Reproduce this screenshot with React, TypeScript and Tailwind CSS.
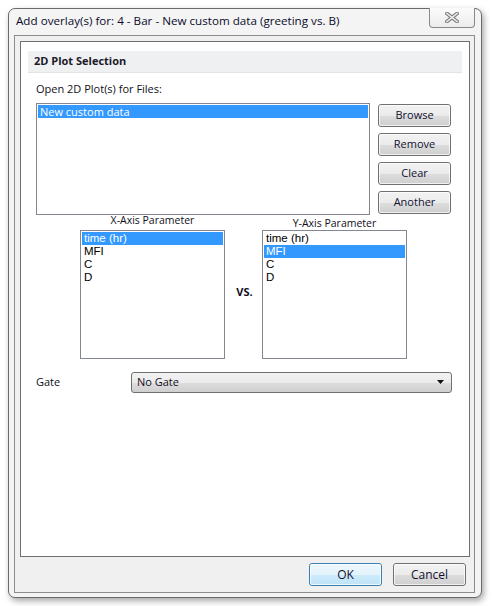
import React from "react";

const ui = { fontFamily: '"Open Sans", "Noto Sans", sans-serif' };
const listFont = { fontFamily: '"Liberation Sans", Arial, sans-serif' };

function WinButton({ label, focused = false, small = false }: { label: string; focused?: boolean; small?: boolean }) {
  return (
    <div
      className={
        "relative h-[23px] w-[73px] rounded-[3px] border flex items-center justify-center text-[#101030] " +
        (small ? "text-[11px] " : "text-[12px] ") +
        (focused
          ? "border-[#3c7fb1] bg-[linear-gradient(#eef7fd_0%,#e3f3fc_50%,#cdebfb_51%,#bfe3f7_100%)]"
          : "border-[#707070] bg-[linear-gradient(#f2f2f2_0%,#ebebeb_50%,#dddddd_51%,#cfcfcf_100%)]")
      }
      style={ui}
    >
      <div className="absolute inset-0 rounded-[2px] border border-white/70" />
      <span className="relative">{label}</span>
    </div>
  );
}

function ParamList({ items, selected }: { items: string[]; selected: number }) {
  return (
    <div className="h-[129px] w-[145px] border border-[#828790] bg-white p-[1px]" style={listFont}>
      {items.map((it, i) => (
        <div
          key={it}
          className={
            "h-[13px] leading-[13px] text-[11.5px] pl-[2px] " +
            (i === selected ? "bg-[#3399ff] text-white" : "text-[#000]")
          }
        >
          {it}
        </div>
      ))}
    </div>
  );
}

export default function App() {
  return (
    <div className="w-[493px] h-[606px] bg-white pt-[8px] pl-[8px]" style={ui}>
      <div className="w-[474px] h-[590px] border border-[#6a6a6a] rounded-[7px] bg-[#f4f4f4] shadow-[2px_3px_6px_rgba(0,0,0,0.35)] flex flex-col">
        {/* title bar */}
        <div className="h-[26px] flex items-start justify-between">
          <div className="pl-[7px] pt-[4px] text-[11.65px] leading-[16px] text-[#0b0b2a]">
            Add overlay(s) for: 4 - Bar - New custom data (greeting vs. B)
          </div>
          <div className="-mt-px mr-[6px] w-[46px] h-[20px] border border-[#8a8a8a] border-t-0 rounded-b-[4px] bg-[linear-gradient(#fbfbfb,#ececec)] flex items-center justify-center">
            <svg width="14" height="11" viewBox="0 0 14 11">
              <line x1="2" y1="1.5" x2="12" y2="9.5" stroke="#7c7c7c" strokeWidth="3.6" strokeLinecap="square" />
              <line x1="12" y1="1.5" x2="2" y2="9.5" stroke="#7c7c7c" strokeWidth="3.6" strokeLinecap="square" />
              <line x1="2" y1="1.5" x2="12" y2="9.5" stroke="#f2f2f2" strokeWidth="1.6" strokeLinecap="square" />
              <line x1="12" y1="1.5" x2="2" y2="9.5" stroke="#f2f2f2" strokeWidth="1.6" strokeLinecap="square" />
            </svg>
          </div>
        </div>

        {/* client area */}
        <div className="ml-[5px] w-[461px] h-[558px] border border-[#8c8c8c] bg-[#f0f0f0] pl-[5px] pt-[5px] flex flex-col">
          <div className="w-[450px] h-[516px] border border-[#6f6f6f] bg-white flex flex-col">
            {/* section header */}
            <div className="mt-[9px] mx-[7px] h-[22px] bg-[#eff0f2] border-b border-[#e2e3e6] flex items-center pl-[6px] text-[11px] font-bold text-[#1a1a2a]">
              2D Plot Selection
            </div>
            <div className="mt-[8px] pl-[15px] text-[11px] leading-[16px] text-[#101020]">Open 2D Plot(s) for Files:</div>

            {/* files row */}
            <div className="mt-[6px] flex items-start">
              <div className="ml-[15px] w-[334px] h-[112px] border border-[#828790] bg-white p-[1px]">
                <div className="h-[13px] leading-[13px] bg-[#3399ff] text-white text-[11px] pl-[2px]">New custom data</div>
              </div>
              <div className="ml-[8px] mt-[1px] flex flex-col gap-[6px]">
                <WinButton label="Browse" small />
                <WinButton label="Remove" small />
                <WinButton label="Clear" small />
                <WinButton label="Another" small />
              </div>
            </div>

            {/* axis row */}
            <div className="-mt-[3px] flex items-start">
              <div className="ml-[59px] flex flex-col items-center">
                <div className="h-[16px] leading-[16px] text-[10.5px] text-[#101020]">X-Axis Parameter</div>
                <div className="mt-[2px]">
                  <ParamList items={["time (hr)", "MFI", "C", "D"]} selected={0} />
                </div>
              </div>
              <div className="w-[37px] pl-[2px] pt-[72px] text-center text-[11px] font-bold text-[#101020]">VS.</div>
              <div className="flex flex-col items-center">
                <div className="mt-[3px] h-[16px] leading-[16px] text-[10.5px] text-[#101020]">Y-Axis Parameter</div>
                <div className="-mt-px">
                  <ParamList items={["time (hr)", "MFI", "C", "D"]} selected={1} />
                </div>
              </div>
            </div>

            {/* gate row */}
            <div className="mt-[13px] flex items-center">
              <div className="ml-[15px] w-[95px] text-[11px] text-[#101020]">Gate</div>
              <div className="w-[321px] h-[21px] rounded-[3px] border border-[#707070] bg-[linear-gradient(#f2f2f2_0%,#ebebeb_50%,#dddddd_51%,#cfcfcf_100%)] flex items-center justify-between pl-[5px] pr-[6px]">
                <span className="text-[11px] text-[#101020]">No Gate</span>
                <svg width="8" height="5" viewBox="0 0 8 5">
                  <path d="M0 0 H7 L3.5 4 Z" fill="#111" />
                </svg>
              </div>
            </div>
          </div>

          {/* footer */}
          <div className="mt-[6px] flex justify-end gap-[11px] pr-[8px]">
            <WinButton label="OK" focused />
            <WinButton label="Cancel" />
          </div>
        </div>
      </div>
    </div>
  );
}
